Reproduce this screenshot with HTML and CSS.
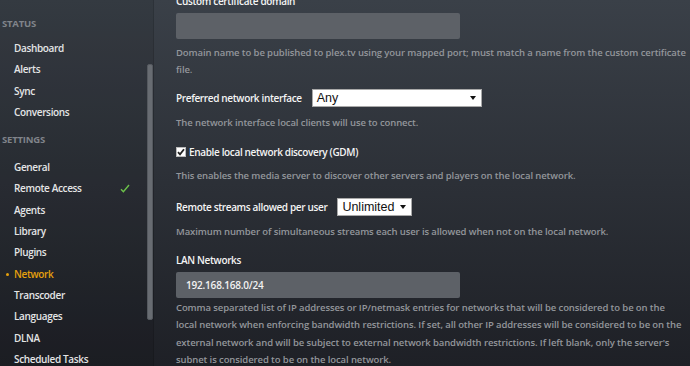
FILE: index.html
```html
<!DOCTYPE html>
<html lang="en">
<head>
  <meta charset="UTF-8">
  <title>Settings - Network</title>
  <link rel="stylesheet" href="styles.css">
</head>
<body>

  <!-- Sidebar -->
  <nav class="sidebar">
    <div class="nav-heading">Status</div>
    <a class="nav-item" href="#">Dashboard</a>
    <a class="nav-item" href="#">Alerts</a>
    <a class="nav-item" href="#">Sync</a>
    <a class="nav-item" href="#">Conversions</a>

    <div class="nav-heading">Settings</div>
    <a class="nav-item" href="#">General</a>
    <a class="nav-item" href="#">Remote Access
      <svg class="ok-icon" width="10" height="9" viewBox="0 0 10 9"><path d="M1 5.2 L3.4 7.8 L9 1" fill="none" stroke="#6cc24a" stroke-width="1.4"/></svg>
    </a>
    <a class="nav-item" href="#">Agents</a>
    <a class="nav-item" href="#">Library</a>
    <a class="nav-item" href="#">Plugins</a>
    <a class="nav-item active" href="#">Network</a>
    <a class="nav-item" href="#">Transcoder</a>
    <a class="nav-item" href="#">Languages</a>
    <a class="nav-item" href="#">DLNA</a>
    <a class="nav-item" href="#">Scheduled Tasks</a>

    <div class="scroll-thumb"></div>
  </nav>

  <!-- Network settings -->
  <main class="content">
    <div class="group first">
      <div class="label">Custom certificate domain</div>
      <div class="text-input"></div>
      <p class="help">Domain name to be published to plex.tv using your mapped port; must match a name from the custom certificate file.</p>
    </div>

    <div class="group row-group">
      <div class="row">
        <span class="label">Preferred network interface</span>
        <div class="select wide">Any<span class="arrow"></span></div>
      </div>
      <p class="help">The network interface local clients will use to connect.</p>
    </div>

    <div class="group check-group">
      <div class="row">
        <span class="check-box">
          <svg width="8" height="8" viewBox="0 0 8 8"><path d="M1 4.2 L3 6.4 L7 1.2" fill="none" stroke="#222" stroke-width="1.8"/></svg>
        </span>
        <span class="label">Enable local network discovery (GDM)</span>
      </div>
      <p class="help">This enables the media server to discover other servers and players on the local network.</p>
    </div>

    <div class="group row-group streams">
      <div class="row">
        <span class="label">Remote streams allowed per user</span>
        <div class="select">Unlimited<span class="arrow"></span></div>
      </div>
      <p class="help">Maximum number of simultaneous streams each user is allowed when not on the local network.</p>
    </div>

    <div class="group lan-group">
      <div class="label">LAN Networks</div>
      <div class="text-input">192.168.168.0/24</div>
      <p class="help tight">Comma separated list of IP addresses or IP/netmask entries for networks that will be considered to be on the local network when enforcing bandwidth restrictions. If set, all other IP addresses will be considered to be on the external network and will be subject to external network bandwidth restrictions. If left blank, only the server's subnet is considered to be on the local network.</p>
    </div>
  </main>

</body>
</html>
```

FILE: styles.css
```css
/* Page */
html, body {
  margin: 0;
  height: 366px;
  overflow: hidden;
}
body {
  display: flex;
  background: linear-gradient(#3a4048, #1e2026);
  font-family: "Open Sans", "Liberation Sans", sans-serif;
  font-weight: 600;
}

/* Sidebar */
.sidebar {
  position: relative;
  width: 153px;
  flex-shrink: 0;
  padding-top: 14px;
  background: rgba(0, 0, 0, 0.09);
  border-right: 1px solid rgba(0, 0, 0, 0.12);
}
.nav-heading {
  margin: 7px 0;
  padding-left: 2px;
  line-height: 20px;
  font-size: 9.5px;
  font-weight: 700;
  letter-spacing: -0.2px;
  text-transform: uppercase;
  color: #80848a;
}
.nav-heading:first-child {
  margin: 0 0 4px;
}
.nav-item {
  position: relative;
  display: block;
  padding-left: 14px;
  line-height: 21.3px;
  font-size: 10px;
  letter-spacing: -0.35px;
  color: #e4e5e6;
  text-decoration: none;
}
.nav-item.active {
  color: #e5a00d;
}
.nav-item.active::before {
  content: "";
  position: absolute;
  left: 6px;
  top: 9px;
  width: 3px;
  height: 3px;
  border-radius: 50%;
  background: #e5a00d;
}
.ok-icon {
  position: absolute;
  left: 120px;
  top: 6px;
}
.scroll-thumb {
  position: absolute;
  left: 147px;
  top: 64px;
  width: 4px;
  height: 254px;
  border-radius: 2px;
  background: #686c72;
  border: 1px solid #55595f;
}

/* Content */
.content {
  width: 514px;
  padding-left: 22px;
  margin-top: -7px;
}
.group {
  margin-top: 14px;
}
.group.first {
  margin-top: 0;
}
.label {
  line-height: 16px;
  font-size: 10px;
  font-weight: 600;
  letter-spacing: -0.35px;
  color: #f4f4f4;
}
.text-input {
  width: 274px;
  height: 26px;
  margin-top: 4px;
  padding-left: 10px;
  line-height: 26px;
  font-size: 10px;
  letter-spacing: -0.2px;
  color: #f2f2f2;
  background: #5d6167;
  border-radius: 2px;
}
.help {
  margin: 5px 0 0;
  line-height: 17px;
  font-size: 9.5px;
  letter-spacing: -0.1px;
  color: #93969b;
}
.help.tight {
  margin: 1px 5px 0 0;
  line-height: 17.4px;
}
.row {
  display: flex;
  align-items: center;
  height: 18px;
}
.row-group {
  margin-top: 11px;
}
.row-group .help {
  margin-top: 7px;
}
.row-group.streams {
  margin-top: 14px;
}
.check-group {
  margin-top: 13px;
}
.check-group .row {
  height: 16px;
}
.check-group .help {
  margin-top: 7px;
}
.lan-group {
  margin-top: 12px;
}
.row .label {
  margin-right: 10px;
}

/* Select boxes */
.select {
  position: relative;
  box-sizing: border-box;
  height: 18px;
  padding: 0 16px 0 4px;
  line-height: 16px;
  font-family: "Liberation Sans", Arial, sans-serif;
  font-weight: 400;
  font-size: 12.5px;
  color: #111;
  background: #fff;
  border: 1px solid #a9a9a9;
}
.select.wide {
  width: 170px;
}
.arrow {
  position: absolute;
  right: 5px;
  top: 6px;
  border-left: 3px solid transparent;
  border-right: 3px solid transparent;
  border-top: 4px solid #111;
}

/* Checkbox */
.check-box {
  display: flex;
  align-items: center;
  justify-content: center;
  width: 8px;
  height: 8px;
  margin-right: 3px;
  background: #fff;
  border: 1px solid #bbb;
}
```
